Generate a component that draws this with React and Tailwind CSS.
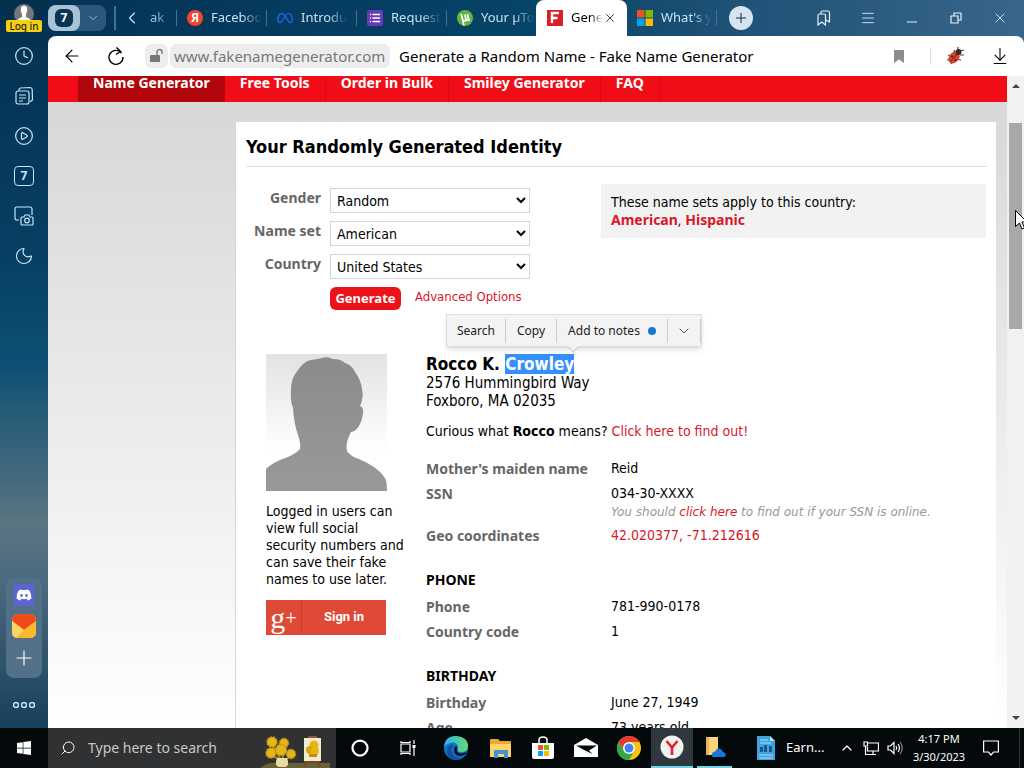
import {
  ArrowDownToLine,
  ArrowLeft,
  ChevronDown,
  ChevronLeft,
  ChevronUp,
  Circle,
  CirclePlay,
  Clock,
  List,
  Menu,
  Minus,
  Moon,
  Plus,
  Search,
  X,
} from 'lucide-react';
import { FaDiscord, FaMeta, FaWindows } from 'react-icons/fa6';

const NotesIcon = () => (
  <svg className="size-5" viewBox="0 0 20 20" fill="none" stroke="currentColor" strokeWidth="1.2">
    <rect x="2" y="5" width="13" height="13" rx="2" />
    <path d="M5 5V3.5Q5 2.2 6.5 2L16 1.500Q18 1.500 18.200 3.500L18.500 13Q18.500 15 16 15.500M5 9h7M5 12h7M5 15h4" />
  </svg>
);

const CaptureIcon = () => (
  <svg className="size-5" viewBox="0 0 20 20" fill="none" stroke="currentColor" strokeWidth="1.2">
    <path d="M5 14H3Q1 14 1 12V3q0-2 2-2h13q2 0 2 2v6" />
    <path d="M7 12q0-1 1-1h2l1-2h4l1 2h2q1 0 1 1v6q0 1-1 1H8q-1 0-1-1z" />
    <circle cx="13" cy="14.500" r="2.300" />
  </svg>
);

const BookmarksIcon = () => (
  <svg className="size-4" viewBox="0 0 16 16" fill="none" stroke="currentColor" strokeWidth="1.2">
    <path d="M2 5.500Q2 4 3.500 4H8q1.500 0 1.500 1.500V15L5.800 12 2 15zM5 4V2.500Q5 1 6.500 1H12q1.500 0 1.500 1.500V12l-3.500-2" />
  </svg>
);

const ReloadIcon = () => (
  <svg className="size-5" viewBox="0 0 20 20" fill="none" stroke="currentColor" strokeWidth="1.4">
    <path d="M15.500 7A7 7 0 1 0 17 11M10.500 1.500L14.500 5.500L10 8.500" />
  </svg>
);

const LockIcon = () => (
  <svg className="size-4" viewBox="0 0 16 16">
    <rect x="1" y="7" width="10" height="7" rx="1" fill="#777" />
    <path d="M8 7V4q0-2.500 2.500-2.500T13 4v2" fill="none" stroke="#777" strokeWidth="1.4" />
  </svg>
);

const BugIcon = () => (
  <svg className="size-5" viewBox="0 0 20 20">
    <path d="M3 9l4 1M2 14l5-1M6 18l2-3M9 4l1 4M13 1l0 3M19 4l-4 1M19 9l-4 0M16 14l-4-1" stroke="#54403a" strokeWidth="1.200" />
    <ellipse cx="9" cy="11.500" rx="5" ry="6.500" fill="#d8452c" transform="rotate(42 9 11.500)" />
    <circle cx="13.500" cy="6" r="3" fill="#3a2a26" />
    <path d="M12 8L5 16" stroke="#5b1f14" />
    <circle cx="7" cy="10.500" r="1" fill="#4b1a12" />
    <circle cx="10.500" cy="14" r="1" fill="#4b1a12" />
  </svg>
);

const YandexIcon = () => (
  <span className="flex size-4 items-center justify-center rounded-full bg-[#f4442c] text-xs font-bold text-white">Я</span>
);

const FormsIcon = () => (
  <span className="flex size-4 items-center justify-center rounded-xs bg-[#673ab7] text-white">
    <List className="size-3" strokeWidth={3} />
  </span>
);

const TorrentIcon = () => (
  <svg className="size-4" viewBox="0 0 16 16">
    <circle cx="8" cy="8" r="8" fill="#62b445" />
    <path d="M4 4L5.500 9Q6.500 12 9 10.500L8 4.500M8.500 8.500Q9.500 11 11.500 9.500L10.500 4M11.500 9l1 2" fill="none" stroke="#fff" strokeWidth="1.700" />
    <path d="M5.500 10L7 15.500" stroke="#fff" strokeWidth="1.500" />
  </svg>
);

const FakeNameIcon = () => (
  <svg className="size-4" viewBox="0 0 16 16">
    <rect width="16" height="16" fill="#dc1d2a" />
    <path d="M5 13V3h7M5 8h5.500" fill="none" stroke="#fff" strokeWidth="2.400" />
  </svg>
);

const MicrosoftIcon = () => (
  <svg className="size-4" viewBox="0 0 16 16">
    <path d="M0 0h7.500v7.500H0z" fill="#f25022" />
    <path d="M8.500 0H16v7.500H8.500z" fill="#7fba00" />
    <path d="M0 8.500h7.500V16H0z" fill="#00a4ef" />
    <path d="M8.500 8.500H16V16H8.500z" fill="#ffb900" />
  </svg>
);

const EdgeIcon = () => (
  <svg className="size-6" viewBox="0 0 24 24">
    <defs>
      <linearGradient id="edgeTop" x1="0" x2="1">
        <stop offset="0" stopColor="#2fb4ee" />
        <stop offset="1" stopColor="#67d96b" />
      </linearGradient>
    </defs>
    <circle cx="12" cy="12" r="12" fill="#1273cf" />
    <path d="M0 11Q1 0 12 0q12 1 12 10 0 6-7 6-4 0-3-3 1-5-4-6.500Q4 6 0 11z" fill="url(#edgeTop)" />
    <path d="M10 9q-4 3-2 8 3 6 11 4-6 5-13 1Q1 17 4 11q2-3 6-2z" fill="#134f9c" />
    <path d="M13 13q-1 3 3 4.500 3 .5 7-2-2 4-6 4.500-7 0-7-6 0-3 2-4 1.500 1 1 3z" fill="#04121f" />
  </svg>
);

const FolderIcon = () => (
  <svg className="size-6" viewBox="0 0 24 24">
    <path d="M1 4q0-1 1-1h7l2 2h10q1 0 1 1v15H1z" fill="#e8a92f" />
    <path d="M1 8h21v13H1z" fill="#fdd465" />
    <path d="M5 22v-7q0-1 1-1h12q1 0 1 1v7h-4v-4H9v4z" fill="#3f93d6" />
  </svg>
);

const StoreIcon = () => (
  <svg className="size-6" viewBox="0 0 24 24">
    <path d="M8 7V4q0-3 4-3t4 3v3" fill="none" stroke="#fff" strokeWidth="1.500" />
    <path d="M1 7h22v14q0 2-2 2H3q-2 0-2-2z" fill="#fff" />
    <path d="M7 9h5v5H7z" fill="#f25022" />
    <path d="M13 9h5v5h-5z" fill="#7fba00" />
    <path d="M7 15h5v5H7z" fill="#00a4ef" />
    <path d="M13 15h5v5h-5z" fill="#ffb900" />
  </svg>
);

const MailIcon = () => (
  <svg className="size-6" viewBox="0 0 24 24">
    <path d="M0 9L12 2l12 7v12H0z" fill="#fff" />
    <path d="M2 9.500h21l-8 5 3.500 3.500L11 14.500z" fill="#04090b" />
  </svg>
);

const ChromeIcon = () => (
  <svg className="size-6" viewBox="0 0 24 24">
    <circle cx="12" cy="12" r="12" fill="#fbc116" />
    <path d="M1.600 6A12 12 0 0 1 22.400 6H12L6.800 15z" fill="#e33b2e" />
    <path d="M1.600 6A12 12 0 0 0 12 24l5.200-9H6.800z" fill="#2da94f" />
    <circle cx="12" cy="12" r="6" fill="#fff" />
    <circle cx="12" cy="12" r="4.500" fill="#4285f4" />
  </svg>
);

const YandexBrowserIcon = () => (
  <svg className="size-6" viewBox="0 0 24 24">
    <circle cx="12" cy="12" r="11.500" fill="#f2f2f2" />
    <path d="M6.500 6L12 12.500 17.500 6M12 12v8" fill="none" stroke="#e2202c" strokeWidth="2.600" />
  </svg>
);

const CloudFolderIcon = () => (
  <svg className="size-6" viewBox="0 0 24 24">
    <path d="M3 2h12v18H3z" fill="#f9d67a" />
    <path d="M3 2h3v18H3z" fill="#e6b64c" />
    <path d="M10 22q-2-1-1-3.500 1-2 3-2 2-4 5.500-2.500 2 1 2.500 3 3.500 1 2.500 4-.5 1-2 1z" fill="#1678d4" />
  </svg>
);

const DocumentIcon = () => (
  <svg className="size-6" viewBox="0 0 24 24">
    <path d="M3 0h13l5 5v19H3z" fill="#3fa3e0" />
    <path d="M16 0v5h5z" fill="#b6e0f7" />
    <path d="M6 4h8M6 7h11M5 19h14M5 22h14" stroke="#a9dbf6" strokeWidth="1.200" />
    <path d="M6 16v-5h3v5M10 16V9h3v7M15 16v-6h3v6" fill="#17588f" />
  </svg>
);

const TaskViewIcon = () => (
  <svg className="size-4" viewBox="0 0 16 16" fill="none" stroke="#fff" strokeWidth="1.200">
    <path d="M1 4h9v8H1zM1 1v1.500h9V1M1 15v-1.500h9V15M14 0v4M14 8v8" />
    <path d="M12.500 5h3v3h-3z" fill="#fff" stroke="none" />
  </svg>
);

const NetworkIcon = () => (
  <svg className="size-4" viewBox="0 0 16 16" fill="none" stroke="#fff" strokeWidth="1.200">
    <path d="M5 3h10.500v8H4.500V7M7 14.500h6M10 11v3.500M1 2h3.500v4H1zM2.500 6v8.500H7" />
  </svg>
);

const VolumeIcon = () => (
  <svg className="size-4" viewBox="0 0 16 16" fill="none" stroke="#fff" strokeWidth="1.200">
    <path d="M1 6h2.500L7 2.500v11L3.500 10H1zM9 6q1.500 2 0 4M11 4q3 4 0 8" />
    <path d="M13 2q4.500 6 0 12" stroke="#888" />
  </svg>
);

const NotificationIcon = () => (
  <svg className="size-4" viewBox="0 0 16 16" fill="none" stroke="#fff" strokeWidth="1.200">
    <path d="M.6 1h14.800v11H10.500L8 15l-2.500-3H.6z" />
  </svg>
);

const SunflowersIcon = () => (
  <svg className="h-8 w-[70px]" viewBox="0 0 70 32">
    <path d="M0 32Q6 28 10 27h60v5z" fill="#6b5f35" />
    <path d="M12 8l8 14M26 10l-4 14M10 19l12 5M32 19l-8 6" stroke="#8a8a2c" strokeWidth="2" />
    <g fill="#e3b71b" stroke="#c99411" strokeWidth="1.500" strokeDasharray="2 1">
      <circle cx="12" cy="6" r="5" />
      <circle cx="24" cy="7" r="4.500" />
      <circle cx="11" cy="17" r="5" />
      <circle cx="21" cy="14" r="5.500" />
      <circle cx="31" cy="18" r="4.500" />
    </g>
    <path d="M17 22h10q3 8-2 9h-6q-5-1-2-9z" fill="#ead9a0" />
    <path d="M46 24l-2 7M58 24l2 7M44 26h16" stroke="#6e4a24" strokeWidth="2" />
    <path d="M44 2h17v23H44z" fill="#f3ead2" />
    <circle cx="54" cy="9" r="4.500" fill="#e6b60f" />
    <circle cx="50" cy="14" r="4" fill="#d9a60c" />
    <circle cx="55" cy="15" r="4" fill="#e6b60f" />
    <path d="M49 18h8v3h-8z" fill="#c28e15" />
    <path d="M48 1h9" stroke="#a04f35" strokeWidth="2" />
  </svg>
);

const Silhouette = () => (
  <svg className="h-[137px] w-[121px]" viewBox="0 0 121 137" role="img" aria-label="Profile">
    <defs>
      <linearGradient id="photoBg" x1="0" y1="0" x2="0" y2="1">
        <stop offset="0" stopColor="#e2e2e2" />
        <stop offset="0.7" stopColor="#fff" />
      </linearGradient>
      <linearGradient id="photoBody" x1="0" y1="0" x2="0" y2="1">
        <stop offset="0" stopColor="#8b8b8b" />
        <stop offset="1" stopColor="#999" />
      </linearGradient>
    </defs>
    <rect width="121" height="137" fill="url(#photoBg)" />
    <path
      d="M0 137V115Q5 110 14 106Q29 101 34 95Q35 90 32 81Q28 70 27 54Q24 47 25 35Q25 24 32 16Q38 7 45 6Q52 5 56 4Q61 2 67 5Q75 5 79 9Q86 11 89 18Q95 26 96 35Q98 43 94 52Q98 53 97 60Q96 66 94 70Q91 77 85 78Q79 89 81 97Q84 102 93 105Q112 113 119 124Q121 127 121 137Z"
      fill="url(#photoBody)"
    />
  </svg>
);

const navItems = ['Free Tools', 'Order in Bulk', 'Smiley Generator', 'FAQ'];

const leftTabs = [
  { label: 'Faceboo', icon: <YandexIcon /> },
  { label: 'Introdu', icon: <FaMeta className="size-4 text-[#1565d8]" /> },
  { label: 'Request', icon: <FormsIcon /> },
  { label: 'Your µTo', icon: <TorrentIcon /> },
];

const selects = [
  { id: 'gender', label: 'Gender', value: 'Random' },
  { id: 'nameset', label: 'Name set', value: 'American' },
  { id: 'country', label: 'Country', value: 'United States' },
];

const Tab = ({ icon, label }) => (
  <button className="flex h-4 w-[90px] shrink-0 items-center gap-2 border-l border-[#47718f] pl-2.5 text-[#c6e2f3]">
    <span className="shrink-0">{icon}</span>
    <span className="mask-r-from-60% text-left whitespace-nowrap">{label}</span>
  </button>
);

const TabBar = () => (
  <div className="flex h-9 shrink-0 items-center text-[13px]">
    <div className="flex h-[26px] w-[58px] shrink-0 items-center rounded-lg bg-[#2b587a]">
      <button className="flex h-[26px] w-8 items-center justify-center rounded-lg bg-[#a9c3d6]">
        <span className="flex size-[18px] items-center justify-center rounded-md bg-[#093454] text-xs font-bold text-white">7</span>
      </button>
      <button className="flex flex-1 justify-center text-[#a9c3d6]" aria-label="Tab groups">
        <ChevronDown className="size-3.5" strokeWidth={1.5} />
      </button>
    </div>
    <span className="ml-2 h-6 w-0.5 bg-[#47718f]" />
    <button className="ml-1.5 text-[#d5eaf7]" aria-label="Scroll tabs">
      <ChevronLeft className="size-5" strokeWidth={1.3} />
    </button>
    <span className="ml-2 w-[26px] mask-r-from-20% text-[#9dc1d9]">ak</span>
    {leftTabs.map((tab) => (
      <Tab key={tab.label} icon={tab.icon} label={tab.label} />
    ))}
    <div className="flex h-9 w-[91px] shrink-0 items-center rounded-t-lg bg-white pl-[11px]">
      <FakeNameIcon />
      <span className="ml-2 w-8 mask-r-from-60% whitespace-nowrap">Gene</span>
      <button aria-label="Close tab">
        <X className="size-3.5" strokeWidth={1.3} />
      </button>
    </div>
    <button className="flex h-4 w-[90px] shrink-0 items-center gap-2 border-r border-[#47718f] pl-2.5 text-[#c6e2f3]">
      <MicrosoftIcon />
      <span className="mask-r-from-60% text-left whitespace-nowrap">What&apos;s y</span>
    </button>
    <button className="ml-3 flex size-6 shrink-0 items-center justify-center rounded-full bg-[#d5e4ef] text-[#0b2d47]" aria-label="New tab">
      <Plus className="size-4" strokeWidth={1.5} />
    </button>
    <div className="ml-auto flex shrink-0 items-center gap-7 pr-4 text-[#e4f1fa]">
      <button aria-label="Bookmarks"><BookmarksIcon /></button>
      <button aria-label="Menu"><Menu className="size-4" strokeWidth={1.3} /></button>
      <button className="pt-2" aria-label="Minimize"><Minus className="size-4" strokeWidth={1.5} /></button>
      <button aria-label="Restore">
        <svg className="size-4" viewBox="0 0 16 16" fill="none" stroke="currentColor" strokeWidth="1.200">
          <path d="M3 6h7v7H3zM6 6V3h7v7h-3" />
        </svg>
      </button>
      <button aria-label="Close"><X className="size-4" strokeWidth={1.3} /></button>
    </div>
  </div>
);

const AddressBar = () => (
  <div className="flex h-10 shrink-0 items-center rounded-t-lg bg-white text-[15px]">
    <button className="ml-3.5" aria-label="Back"><ArrowLeft className="size-5" strokeWidth={1.4} /></button>
    <button className="ml-6" aria-label="Reload"><ReloadIcon /></button>
    <button className="ml-[19px] flex h-6 w-[23px] items-center justify-center rounded-md bg-[#ededed]" aria-label="Connection"><LockIcon /></button>
    <a href="#site" className="ml-0.5 flex h-6 w-[220px] items-center rounded-md bg-[#ededed] pl-1 text-[#777]">www.fakenamegenerator.com</a>
    <span className="ml-[9px] whitespace-nowrap">Generate a Random Name - Fake Name Generator</span>
    <button className="ml-auto" aria-label="Bookmark page">
      <svg className="size-3.5" viewBox="0 0 14 14"><path d="M2 1h10v13L7 10.500 2 14z" fill="#8c8c8c" /></svg>
    </button>
    <span className="ml-6 h-4 w-px bg-[#ddd]" />
    <button className="ml-3.5" aria-label="Extension"><BugIcon /></button>
    <button className="mr-3.5 ml-[25px]" aria-label="Downloads"><ArrowDownToLine className="size-5" strokeWidth={1.3} /></button>
  </div>
);

const Sidebar = () => (
  <aside className="flex w-12 shrink-0 flex-col items-center text-[#c3e6f8]">
    <span className="mt-1 flex size-5 justify-center overflow-hidden rounded-full bg-[#777]">
      <svg className="size-5" viewBox="0 0 20 20"><path d="M7 3q3-3 6 0 1 4-1 7v3l4 2v5H4v-5l4-2v-3Q6 7 7 3z" fill="#fff" /></svg>
    </span>
    <button className="z-10 -mt-1 h-3 w-9 rounded-xs bg-[#f5cf10] text-[10px] leading-3 font-medium text-[#1b2430]">Log in</button>
    <div className="mt-3.5 flex flex-col items-center gap-5">
      <button aria-label="History"><Clock className="size-5" strokeWidth={1.5} /></button>
      <button aria-label="Notes"><NotesIcon /></button>
      <button aria-label="Play"><CirclePlay className="size-5" strokeWidth={1.5} /></button>
      <button className="flex size-5 items-center justify-center rounded border border-current text-xs font-bold">7</button>
      <button aria-label="Screenshot"><CaptureIcon /></button>
      <button aria-label="Night mode"><Moon className="size-5" strokeWidth={1.4} /></button>
    </div>
    <div className="mt-auto flex w-9 flex-col items-center gap-2 rounded-lg bg-[#527087] pt-1.5 pb-2">
      <button className="flex h-[22px] w-5 items-center justify-center bg-[#5b63d6] text-white" aria-label="Discord"><FaDiscord className="size-4" /></button>
      <button aria-label="Mail">
        <svg className="size-6" viewBox="0 0 24 24">
          <rect width="24" height="24" rx="6" fill="#f9c544" />
          <path d="M0 7Q0 0 6 0h12q6 0 6 7L12 16z" fill="#ee4b1d" />
          <path d="M0 7l12 9v8H6q-6 0-6-6z" fill="#fbd563" />
          <path d="M24 7l-12 9L4 24h14q6 0 6-6z" fill="#f8b92e" />
        </svg>
      </button>
      <button className="text-white" aria-label="Add"><Plus className="size-6" strokeWidth={1.2} /></button>
    </div>
    <button className="mt-6 mb-5 flex gap-0.5" aria-label="More">
      <Circle className="size-1.5" strokeWidth={6} />
      <Circle className="size-1.5" strokeWidth={6} />
      <Circle className="size-1.5" strokeWidth={6} />
    </button>
  </aside>
);

const SelectionMenu = () => (
  <div className="absolute top-[192px] left-[210px] z-10 flex h-[33px] items-center divide-x divide-[#ccc] border border-[#ddd] bg-[#f3f3f3] font-['Noto_Sans'] text-xs text-[#222] shadow-md">
    <button className="h-6 px-2.5">Search</button>
    <button className="h-6 px-[11px]">Copy</button>
    <button className="flex h-6 items-center gap-2 px-[11px]">
      Add to notes <span className="size-2 rounded-full bg-[#1976d2]" />
    </button>
    <button className="h-6 px-2" aria-label="More"><ChevronDown className="size-4" strokeWidth={1.2} /></button>
    <span className="absolute -bottom-[5px] left-[122px] size-2 rotate-45 border-r border-b border-[#ccc] bg-[#f3f3f3]" />
  </div>
);

const Row = ({ label, children }) => (
  <div className="mb-2 flex leading-[17px]">
    <dt className="w-[185px] shrink-0 font-['Noto_Sans'] font-bold text-[#666]">{label}</dt>
    <dd>{children}</dd>
  </div>
);

const SectionTitle = ({ children }) => (
  <h3 className="mt-[27px] mb-2.5 font-['Noto_Sans'] leading-[17px] font-bold">{children}</h3>
);

const IdentityCard = () => (
  <main className="relative mr-[11px] ml-[187px] h-[900px] border-l border-[#d5d5d5] bg-white pt-3.5 pr-[9px] pl-[10px]">
    <h2 className="border-b border-[#ddd] pb-2 text-lg leading-[22px] font-bold">Your Randomly Generated Identity</h2>
    <div className="flex justify-between pt-[17px]">
      <form className="flex flex-col gap-2">
        {selects.map((s) => (
          <div key={s.id} className="flex items-start gap-[9px] first:mt-1">
            <label htmlFor={s.id} className="w-[75px] text-right font-['Noto_Sans'] leading-5 font-bold whitespace-nowrap text-[#666]">{s.label}</label>
            <select id={s.id} className="h-[25px] w-[200px] border border-[#d4d4d4] bg-white px-0.5">
              <option>{s.value}</option>
            </select>
          </div>
        ))}
        <div className="flex items-start gap-3.5 pl-[84px]">
          <button type="button" className="h-[23px] w-[71px] rounded-md bg-[#ed1119] font-['Noto_Sans'] text-[13px] font-bold text-white">Generate</button>
          <a href="#advanced" className="text-[13px] leading-5 text-[#d7182a]">Advanced Options</a>
        </div>
      </form>
      <div className="mr-px h-[54px] w-[385px] bg-[#f2f2f2] px-2.5 pt-2.5 leading-[17px]">
        These name sets apply to this country:
        <div className="font-['Noto_Sans'] text-[#333]">
          <a href="#american" className="font-bold text-[#d7182a]">American</a>, <a href="#hispanic" className="font-bold text-[#d7182a]">Hispanic</a>
        </div>
      </div>
    </div>
    <SelectionMenu />
    <div className="mt-11 flex gap-4 pl-5">
      <div className="w-36 shrink-0">
        <Silhouette />
        <p className="mt-3 leading-[17px]">Logged in users can view full social security numbers and can save their fake names to use later.</p>
        <button className="mt-3 flex h-[35px] w-[120px] items-center bg-[#df4a37] text-white">
          <span className="flex h-full w-9 items-center justify-center border-r border-[#d03f2e] font-['Liberation_Serif']">
            <span className="text-3xl leading-6">g</span>
            <span className="text-xl leading-5">+</span>
          </span>
          <span className="flex-1 text-center font-[Roboto] text-[13px] font-bold">Sign in</span>
        </button>
      </div>
      <div className="min-w-0 flex-1">
        <h3 className="text-[17px] leading-5 font-bold">
          Rocco K. <mark className="bg-[#3390ff] text-white">Crowley</mark>
        </h3>
        <address className="text-[15px] leading-[18px] not-italic">
          2576 Hummingbird Way
          <br />
          Foxboro, MA 02035
        </address>
        <p className="mt-3 leading-[18px]">
          Curious what <b>Rocco</b> means? <a href="#meaning" className="text-[#d7182a]">Click here to find out!</a>
        </p>
        <dl className="mt-5">
          <Row label="Mother's maiden name">Reid</Row>
          <Row label="SSN">
            034-30-XXXX
            <div className="-mb-1 font-['DejaVu_Sans'] text-xs leading-[21px] text-[#999] italic">
              You should <a href="#ssn" className="text-[#d7182a]">click here</a> to find out if your SSN is online.
            </div>
          </Row>
          <Row label="Geo coordinates"><a href="#geo" className="text-[#d7182a]">42.020377, -71.212616</a></Row>
        </dl>
        <SectionTitle>PHONE</SectionTitle>
        <dl>
          <Row label="Phone">781-990-0178</Row>
          <Row label="Country code">1</Row>
        </dl>
        <SectionTitle>BIRTHDAY</SectionTitle>
        <dl>
          <Row label="Birthday">June 27, 1949</Row>
          <Row label="Age">73 years old</Row>
        </dl>
      </div>
    </div>
  </main>
);

const Scrollbar = () => (
  <div className="relative flex w-[17px] shrink-0 flex-col items-center bg-[#f1f1f1] text-[#444]">
    <svg className="mt-1.5 h-2 w-2.5" viewBox="0 0 10 8"><path d="M1 6l4-4 4 4z" fill="currentColor" /></svg>
    <div className="mt-[33px] h-[206px] w-[13px] bg-[#a8a8a8]" />
    <svg className="mt-auto mb-1.5 h-2 w-2.5" viewBox="0 0 10 8"><path d="M1 2l4 4 4-4z" fill="currentColor" /></svg>
    <svg className="absolute top-[134px] left-2 h-5 w-3" viewBox="0 0 12 20"><path d="M.5 .5v16l4-3.500 2.500 6 2.500-1-2.500-6H12z" fill="#fff" stroke="#000" /></svg>
  </div>
);

const WebPage = () => (
  <div className="flex min-h-0 flex-1 bg-white font-['DejaVu_Sans_Condensed','Noto_Sans',sans-serif] text-sm text-black">
    <div className="flex-1 overflow-hidden bg-linear-to-b from-[#d6d6d6] to-white">
      <nav className="flex h-[26px] bg-[#f00d18] pl-[30px] font-['Noto_Sans'] leading-[13px] font-bold text-white">
        <a href="#name" className="bg-[#b1060b] px-[15px]">Name Generator</a>
        {navItems.map((item) => (
          <a key={item} href="#nav" className="border-r border-[#d50c16] px-[15px]">{item}</a>
        ))}
      </nav>
      <div className="h-5" />
      <IdentityCard />
    </div>
    <Scrollbar />
  </div>
);

const Taskbar = () => (
  <footer className="flex h-10 shrink-0 items-center bg-[#04090b] text-white">
    <button className="flex w-12 justify-center" aria-label="Start"><FaWindows className="size-4" /></button>
    <label className="flex h-full w-72 items-center bg-[#303132] pl-3">
      <Search className="size-4 -scale-x-100" strokeWidth={1.5} />
      <input className="ml-3 w-[166px] text-sm placeholder:text-[#c8c8c8]" placeholder="Type here to search" aria-label="Search" />
      <span className="mt-auto ml-1.5"><SunflowersIcon /></span>
    </label>
    <button className="flex w-12 justify-center" aria-label="Cortana"><Circle className="size-[18px]" strokeWidth={3} /></button>
    <button className="flex w-12 justify-center" aria-label="Task view"><TaskViewIcon /></button>
    <button className="flex w-12 justify-center" aria-label="Edge"><EdgeIcon /></button>
    <button className="flex w-[42px] justify-center" aria-label="Explorer"><FolderIcon /></button>
    <button className="flex w-[42px] justify-center" aria-label="Store"><StoreIcon /></button>
    <button className="flex w-[43px] justify-center" aria-label="Mail"><MailIcon /></button>
    <button className="flex w-[43px] justify-center" aria-label="Chrome"><ChromeIcon /></button>
    <button className="ml-px flex h-full w-[42px] items-center justify-center border-b-2 border-[#76d3e6] bg-[#2f383c]" aria-label="Yandex"><YandexBrowserIcon /></button>
    <button className="mx-1 flex h-full w-[35px] items-center justify-center border-b-2 border-[#76d3e6]" aria-label="OneDrive"><CloudFolderIcon /></button>
    <button className="ml-[18px] flex items-center gap-2 text-[13px]"><DocumentIcon />Earn...</button>
    <div className="ml-auto flex items-center">
      <button aria-label="Hidden icons"><ChevronUp className="size-4" strokeWidth={1.8} /></button>
      <span className="ml-2"><NetworkIcon /></span>
      <span className="ml-2"><VolumeIcon /></span>
      <div className="ml-1.5 w-[60px] text-center text-[11px] leading-[18px]">
        4:17 PM
        <br />
        3/30/2023
      </div>
      <button className="mr-5 ml-3.5" aria-label="Notifications"><NotificationIcon /></button>
      <span className="mr-1 h-10 w-px bg-[#333]" />
    </div>
  </footer>
);

const App = () => {
  return (
    <div className="flex h-screen flex-col overflow-hidden font-['Noto_Sans',sans-serif]">
      <div className="flex min-h-0 flex-1 bg-[linear-gradient(to_bottom,#04304f_0%,#073f63_35%,#0d5073_50%,#5b7482_72%,#4b6a7e_80%,#17405c_100%)]">
        <Sidebar />
        <div className="flex min-w-0 flex-1 flex-col bg-linear-to-r from-[#043355] via-[#064468] to-[#38668a]">
          <TabBar />
          <AddressBar />
          <WebPage />
        </div>
      </div>
      <Taskbar />
    </div>
  );
};

export default App;
